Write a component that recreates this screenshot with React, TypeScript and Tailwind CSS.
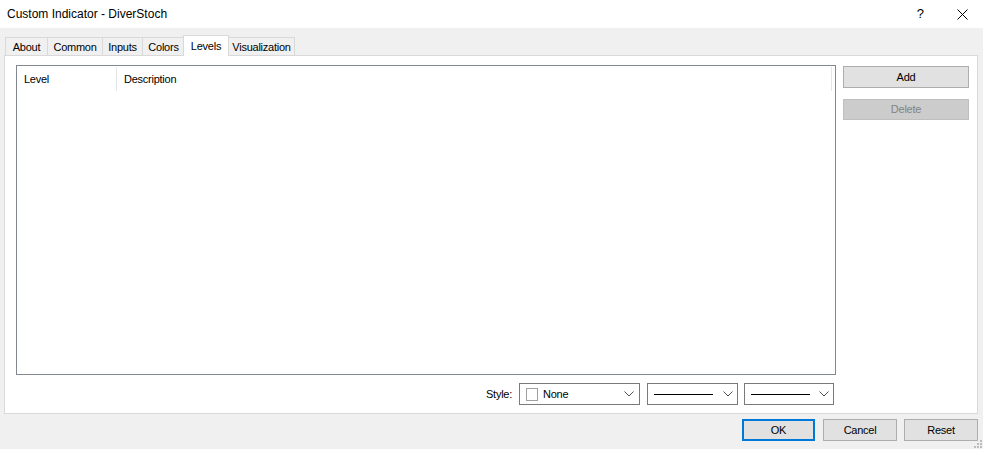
import React from "react";

const tabs = [
  { label: "About", w: "w-[43px]" },
  { label: "Common", w: "w-[56px]" },
  { label: "Inputs", w: "w-[41px]" },
  { label: "Colors", w: "w-[43px]" },
  { label: "Levels", w: "w-[46px]", active: true },
  { label: "Visualization", w: "w-[67px]" },
];

function Chevron() {
  return (
    <svg width="10" height="6" viewBox="0 0 10 6" className="shrink-0">
      <path d="M0.5 0.5 L5 5 L9.5 0.5" fill="none" stroke="#505050" strokeWidth="1" />
    </svg>
  );
}

function LineCombo({ width }: { width: string }) {
  return (
    <div className={`flex h-[22px] ${width} items-center border border-[#7a7a7a] bg-white pl-[6px] pr-[4px]`}>
      <div className="h-px w-[59px] bg-black" />
      <div className="flex-1" />
      <Chevron />
    </div>
  );
}

function Button({
  children,
  className = "",
}: {
  children: React.ReactNode;
  className?: string;
}) {
  return (
    <div
      className={`flex h-[22px] items-center justify-center border border-[#adadad] bg-[#e1e1e1] ${className}`}
    >
      {children}
    </div>
  );
}

export default function App() {
  return (
    <div className="relative h-[449px] w-[983px] overflow-hidden bg-[#f0f0f0] font-['Segoe_UI','Liberation_Sans',sans-serif] text-[11px] tracking-[-0.25px] text-black">
      {/* title bar */}
      <div className="flex h-[28px] items-center bg-white pl-[7px] text-[12px] tracking-normal">
        <span>Custom Indicator - DiverStoch</span>
        <div className="flex-1" />
        <span className="mr-[33px] text-[13px]">?</span>
        <svg width="11" height="11" viewBox="0 0 11 11" className="mr-[15px]">
          <path d="M0.5 0.5 L10.5 10.5 M10.5 0.5 L0.5 10.5" stroke="#000" strokeWidth="1" />
        </svg>
      </div>

      {/* tabs */}
      <div className="relative z-10 -mb-px mt-[7px] flex h-[21px] items-start pl-[5px]">
        {tabs.map((t) =>
          t.active ? (
            <div
              key={t.label}
              className={`-ml-px -mr-px flex h-[21px] ${t.w} items-start justify-center border border-b-0 border-[#d9d9d9] bg-white pt-[2px]`}
            >
              {t.label}
            </div>
          ) : (
            <div
              key={t.label}
              className={`mt-[2px] flex h-[18px] ${t.w} -mr-px items-center justify-center border border-b-0 border-[#d9d9d9] bg-[#f0f0f0] pt-[1px]`}
            >
              {t.label}
            </div>
          )
        )}
      </div>

      {/* panel */}
      <div className="ml-[4px] flex h-[359px] w-[974px] border border-[#d9d9d9] bg-white pl-[11px] pt-[9px]">
        <div className="flex w-[820px] flex-col">
          <div className="h-[310px] border border-[#828790] bg-white">
            <div className="flex h-[26px] items-center">
              <div className="flex h-[24px] w-[100px] items-center border-r border-[#e5e5e5] pl-[7px]">
                Level
              </div>
              <div className="flex h-[24px] w-[715px] items-center border-r border-[#e5e5e5] pl-[7px]">
                Description
              </div>
            </div>
          </div>
          <div className="mt-[8px] flex items-center justify-end pr-[2px]">
            <span className="mr-[7px]">Style:</span>
            <div className="flex h-[22px] w-[121px] items-center border border-[#7a7a7a] bg-white pl-[6px] pr-[5px]">
              <div className="h-[13px] w-[12px] border border-[#a0a0a0]" />
              <span className="ml-[5px]">None</span>
              <div className="flex-1" />
              <Chevron />
            </div>
            <div className="w-[7px]" />
            <LineCombo width="w-[91px]" />
            <div className="w-[6px]" />
            <LineCombo width="w-[90px]" />
          </div>
        </div>
        <div className="ml-[7px] flex w-[126px] flex-col">
          <Button className="mt-px">Add</Button>
          <div className="mt-[11px] flex h-[21px] items-center justify-center border border-[#bfbfbf] bg-[#cccccc] text-[#838383]">
            Delete
          </div>
        </div>
      </div>

      {/* footer buttons */}
      <div className="mt-[5px] flex justify-end pr-[5px]">
        <div className="flex h-[22px] w-[73px] items-center justify-center border-2 border-[#0078d7] bg-[#e1e1e1]">
          OK
        </div>
        <Button className="ml-[8px] w-[74px]">Cancel</Button>
        <Button className="ml-[7px] w-[74px]">Reset</Button>
      </div>

      {/* size grip */}
      <svg width="9" height="9" viewBox="0 0 9 9" className="absolute bottom-0 right-0">
        <rect x="6" y="0" width="2" height="2" fill="#bdbdbd" />
        <rect x="3" y="3" width="2" height="2" fill="#bdbdbd" />
        <rect x="6" y="3" width="2" height="2" fill="#bdbdbd" />
        <rect x="0" y="6" width="2" height="2" fill="#bdbdbd" />
        <rect x="3" y="6" width="2" height="2" fill="#bdbdbd" />
        <rect x="6" y="6" width="2" height="2" fill="#bdbdbd" />
      </svg>
    </div>
  );
}
